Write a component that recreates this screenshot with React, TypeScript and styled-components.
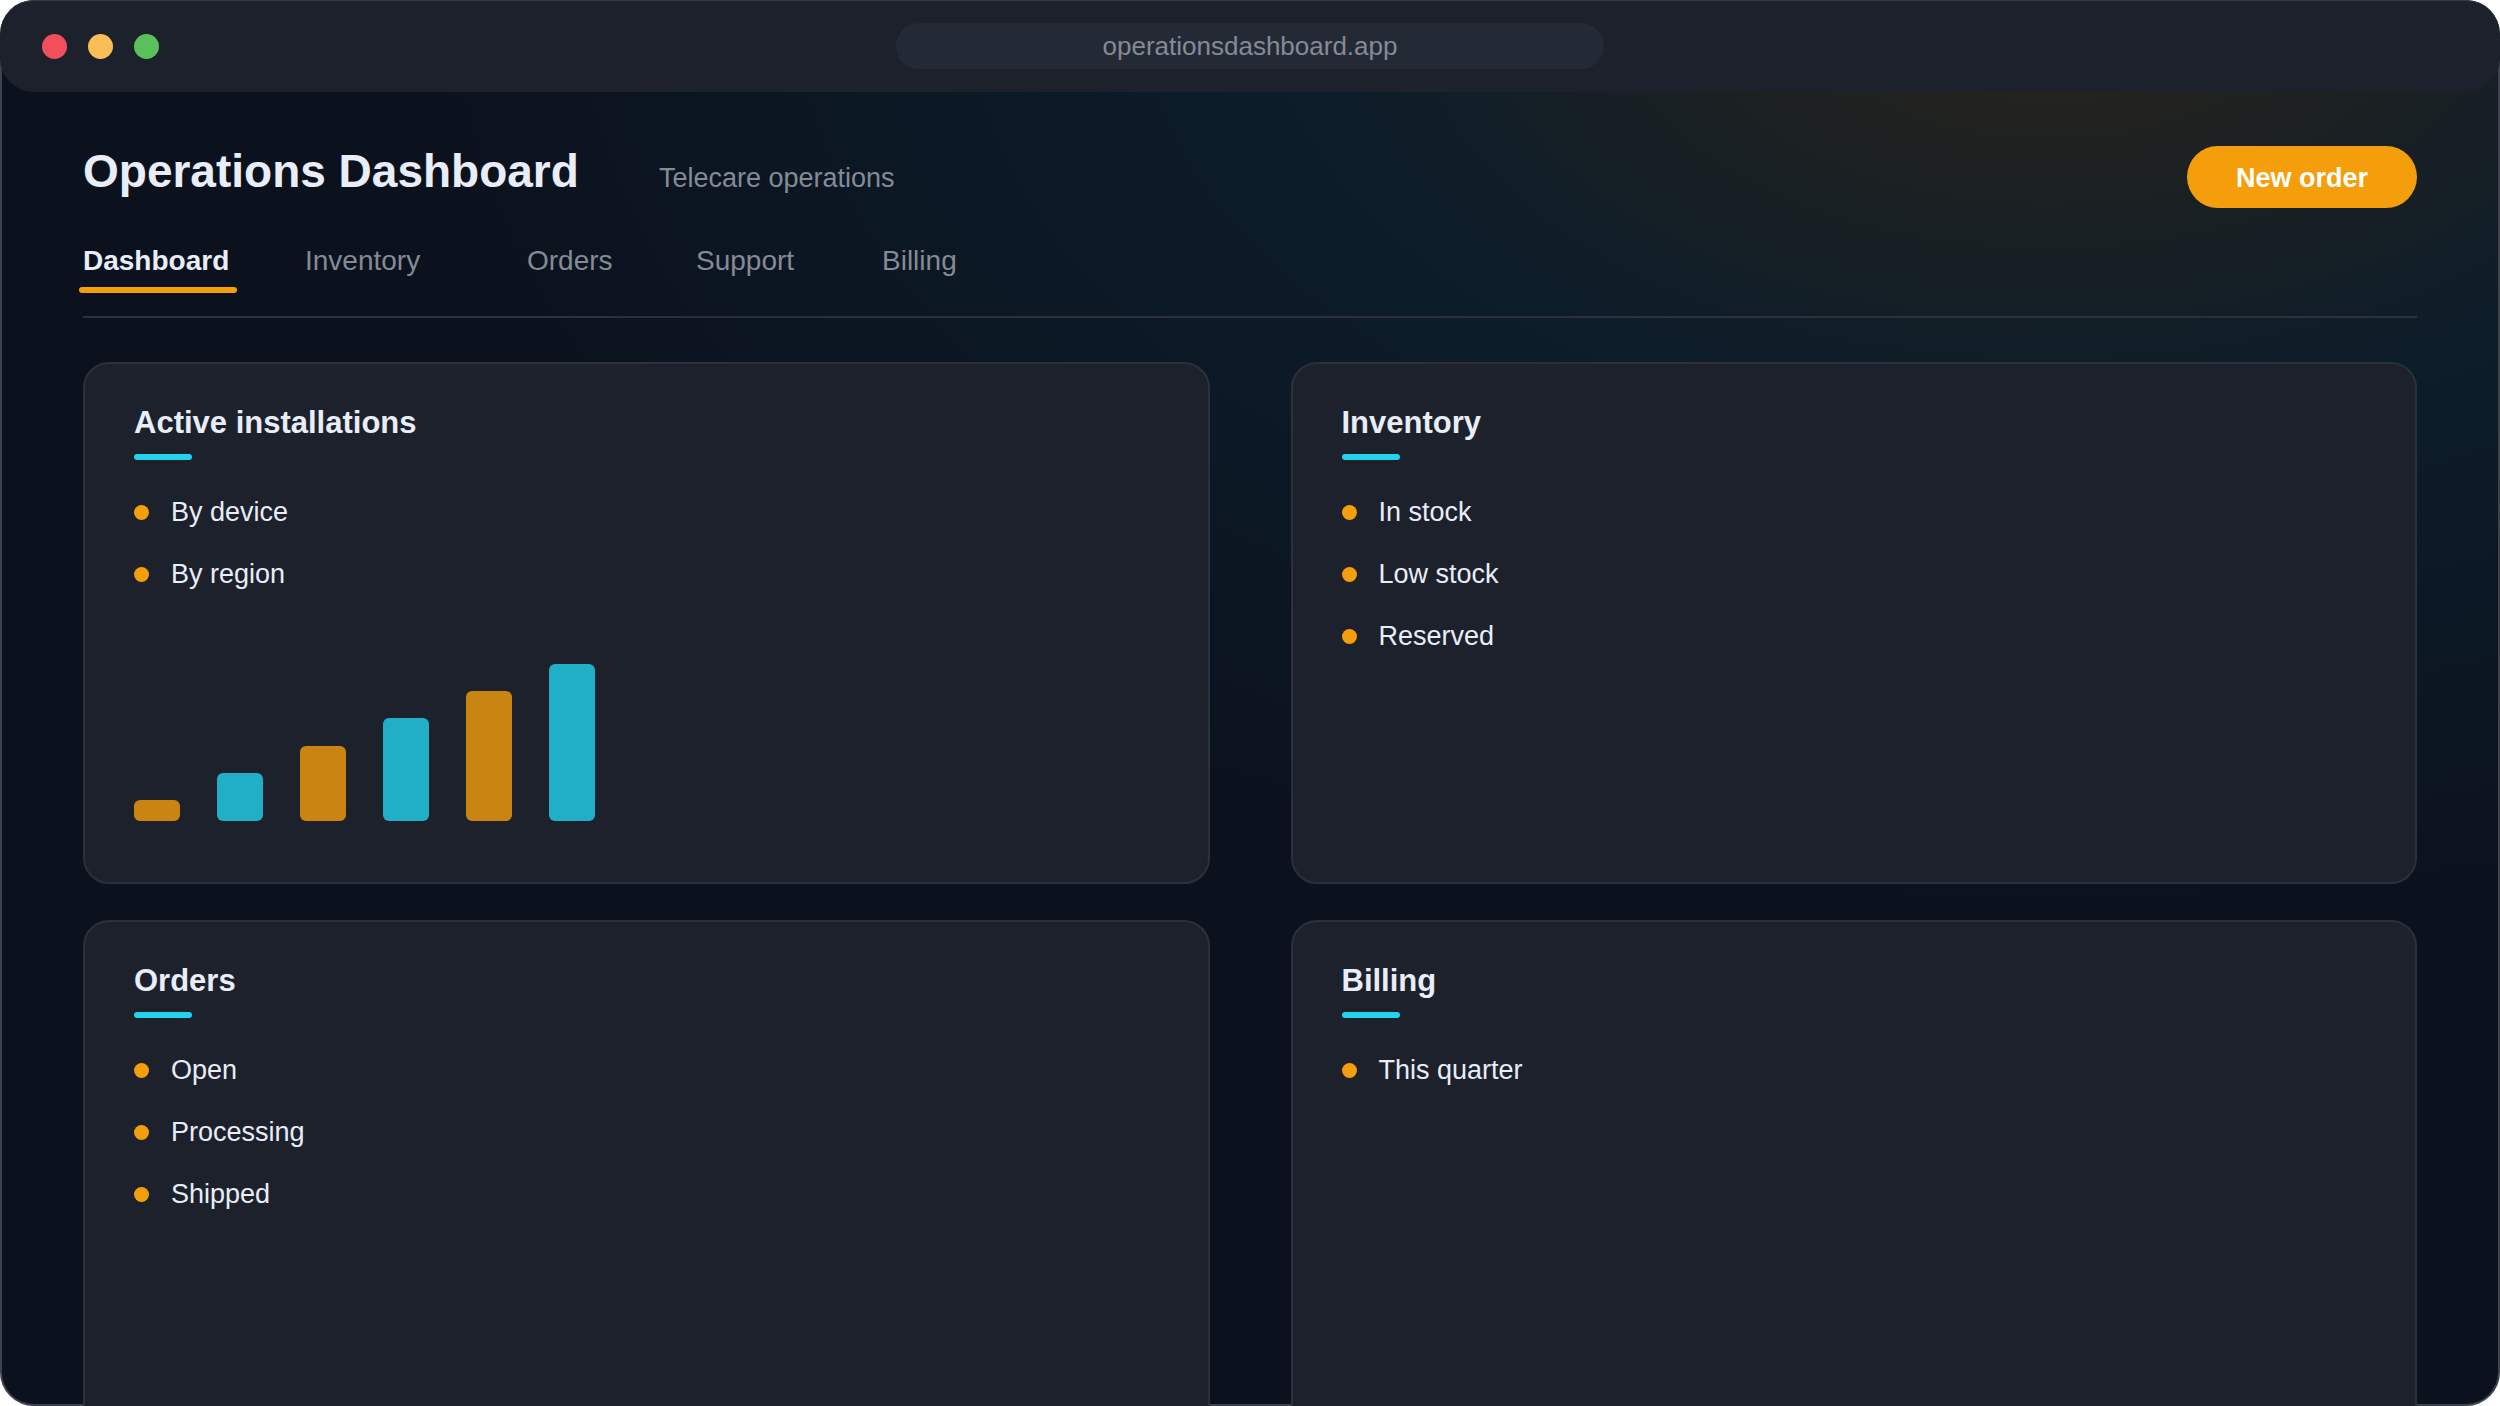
import React from "react";
import styled, { createGlobalStyle } from "styled-components";

const color = {
  base: "#0b121e",
  surface: "#1c212c",
  field: "#242a35",
  line: "#2b303b",
  text: "#e8edf8",
  muted: "#858a95",
  amber: "#f59e0b",
  cyan: "#22d3ee",
};

const GlobalStyle = createGlobalStyle`
  *, *::before, *::after { box-sizing: border-box; }
  body {
    margin: 0;
    background: #fff;
    color: ${color.text};
    font-family: "Liberation Sans", Arial, Helvetica, sans-serif;
  }
  h1, h2, p, ul { margin: 0; padding: 0; }
`;

const Frame = styled.div`
  display: flex;
  flex-direction: column;
  height: 100vh;
  overflow: hidden;
  border-radius: 34px;
  background:
    radial-gradient(
      ellipse 66% 66% at 82% 0%,
      rgba(245, 158, 11, 0.13) 0%,
      rgba(34, 211, 238, 0.055) 45%,
      rgba(34, 211, 238, 0) 100%
    ),
    ${color.base};
  box-shadow: inset 0 0 0 2px #3d424d;
`;

const Chrome = styled.header`
  display: grid;
  grid-template-columns: 1fr 708px 1fr;
  align-items: center;
  flex: none;
  height: 92px;
  padding: 0 42px;
  border-radius: 34px;
  background: ${color.surface};
  box-shadow: inset 0 1px 0 #353b46;
`;

const Lights = styled.div`
  display: flex;
  gap: 21px;
`;

const Light = styled.span<{ $fill: string }>`
  width: 25px;
  height: 25px;
  border-radius: 50%;
  background: ${(p) => p.$fill};
`;

const Address = styled.input`
  height: 46px;
  padding: 0 24px;
  border: 0;
  border-radius: 23px;
  background: ${color.field};
  color: ${color.muted};
  font: 26px "Liberation Sans", Arial, Helvetica, sans-serif;
  text-align: center;
`;

const Page = styled.main`
  display: flex;
  flex-direction: column;
  padding: 53px 83px 0;
`;

const Masthead = styled.div`
  display: flex;
  align-items: baseline;
`;

const Title = styled.h1`
  font-size: 46px;
  line-height: 52px;
  font-weight: 700;
`;

const Subtitle = styled.p`
  margin-left: 80px;
  color: ${color.muted};
  font-size: 27px;
  line-height: 32px;
`;

const Primary = styled.button`
  margin-left: auto;
  padding: 14px 49px 12px;
  border: 0;
  border-radius: 32px;
  background: ${color.amber};
  color: #fff;
  font: 700 27px/36px "Liberation Sans", Arial, Helvetica, sans-serif;
`;

const Tabs = styled.nav`
  display: flex;
  gap: 64px;
  margin: 36px -4px 0;
`;

const Tab = styled.a<{ $width: number; $active: boolean }>`
  width: ${(p) => p.$width}px;
  height: 50px;
  padding-left: 4px;
  color: ${(p) => (p.$active ? color.text : color.muted)};
  font-size: 28px;
  line-height: 34px;
  font-weight: ${(p) => (p.$active ? 700 : 400)};
  text-decoration: none;

  &::after {
    content: "";
    display: ${(p) => (p.$active ? "block" : "none")};
    height: 6px;
    margin: 9px 0 0 -4px;
    border-radius: 3px;
    background: ${color.amber};
  }
`;

const Divider = styled.hr`
  width: 100%;
  height: 2px;
  margin: 22px 0 44px;
  border: 0;
  background: ${color.line};
`;

const Cards = styled.div`
  display: grid;
  grid-template-columns: 1fr 1fr;
  grid-auto-rows: 522px;
  gap: 36px 81px;
`;

const Card = styled.section`
  display: flex;
  flex-direction: column;
  padding: 40px 49px 61px;
  border: 2px solid ${color.line};
  border-radius: 26px;
  background: ${color.surface};
`;

const CardTitle = styled.h2`
  font-size: 31px;
  line-height: 38px;
  font-weight: 700;

  &::after {
    content: "";
    display: block;
    width: 58px;
    height: 6px;
    margin-top: 12px;
    border-radius: 3px;
    background: ${color.cyan};
  }
`;

const List = styled.ul`
  display: flex;
  flex-direction: column;
  gap: 30px;
  margin-top: 36px;
  list-style: none;
`;

const Item = styled.li`
  display: flex;
  align-items: center;
  gap: 22px;
  font-size: 27px;
  line-height: 32px;

  &::before {
    content: "";
    width: 15px;
    height: 15px;
    border-radius: 50%;
    background: ${color.amber};
  }
`;

const Chart = styled.div`
  display: flex;
  align-items: flex-end;
  gap: 37px;
  margin-top: auto;
`;

const Bar = styled.div<{ $fill: string }>`
  width: 46px;
  border-radius: 6px;
  background: ${(p) => p.$fill};
  opacity: 0.8;
`;

const tabs = [
  { label: "Dashboard", width: 158 },
  { label: "Inventory", width: 158 },
  { label: "Orders", width: 105 },
  { label: "Support", width: 122 },
  { label: "Billing", width: 122 },
];

const cards: { title: string; items: string[]; bars?: number[] }[] = [
  { title: "Active installations", items: ["By device", "By region"], bars: [21, 48, 75, 103, 130, 157] },
  { title: "Inventory", items: ["In stock", "Low stock", "Reserved"] },
  { title: "Orders", items: ["Open", "Processing", "Shipped"] },
  { title: "Billing", items: ["This quarter"] },
];

export default function App() {
  return (
    <>
      <GlobalStyle />
      <Frame>
        <Chrome>
          <Lights>
            <Light $fill="#f14f5c" />
            <Light $fill="#f9be55" />
            <Light $fill="#5ac05a" />
          </Lights>
          <Address aria-label="Address" defaultValue="operationsdashboard.app" />
        </Chrome>
        <Page>
          <Masthead>
            <Title>Operations Dashboard</Title>
            <Subtitle>Telecare operations</Subtitle>
            <Primary type="button">New order</Primary>
          </Masthead>
          <Tabs aria-label="Sections">
            {tabs.map((tab, i) => (
              <Tab
                key={tab.label}
                href={`#${tab.label.toLowerCase()}`}
                aria-current={i === 0 ? "page" : undefined}
                $width={tab.width}
                $active={i === 0}
              >
                {tab.label}
              </Tab>
            ))}
          </Tabs>
          <Divider />
          <Cards>
            {cards.map((card) => (
              <Card key={card.title}>
                <CardTitle>{card.title}</CardTitle>
                <List>
                  {card.items.map((item) => (
                    <Item key={item}>{item}</Item>
                  ))}
                </List>
                {card.bars && (
                  <Chart role="img" aria-label={`${card.title} trend`}>
                    {card.bars.map((value, i) => (
                      <Bar key={value} $fill={i % 2 ? color.cyan : color.amber} style={{ height: value }} />
                    ))}
                  </Chart>
                )}
              </Card>
            ))}
          </Cards>
        </Page>
      </Frame>
    </>
  );
}
